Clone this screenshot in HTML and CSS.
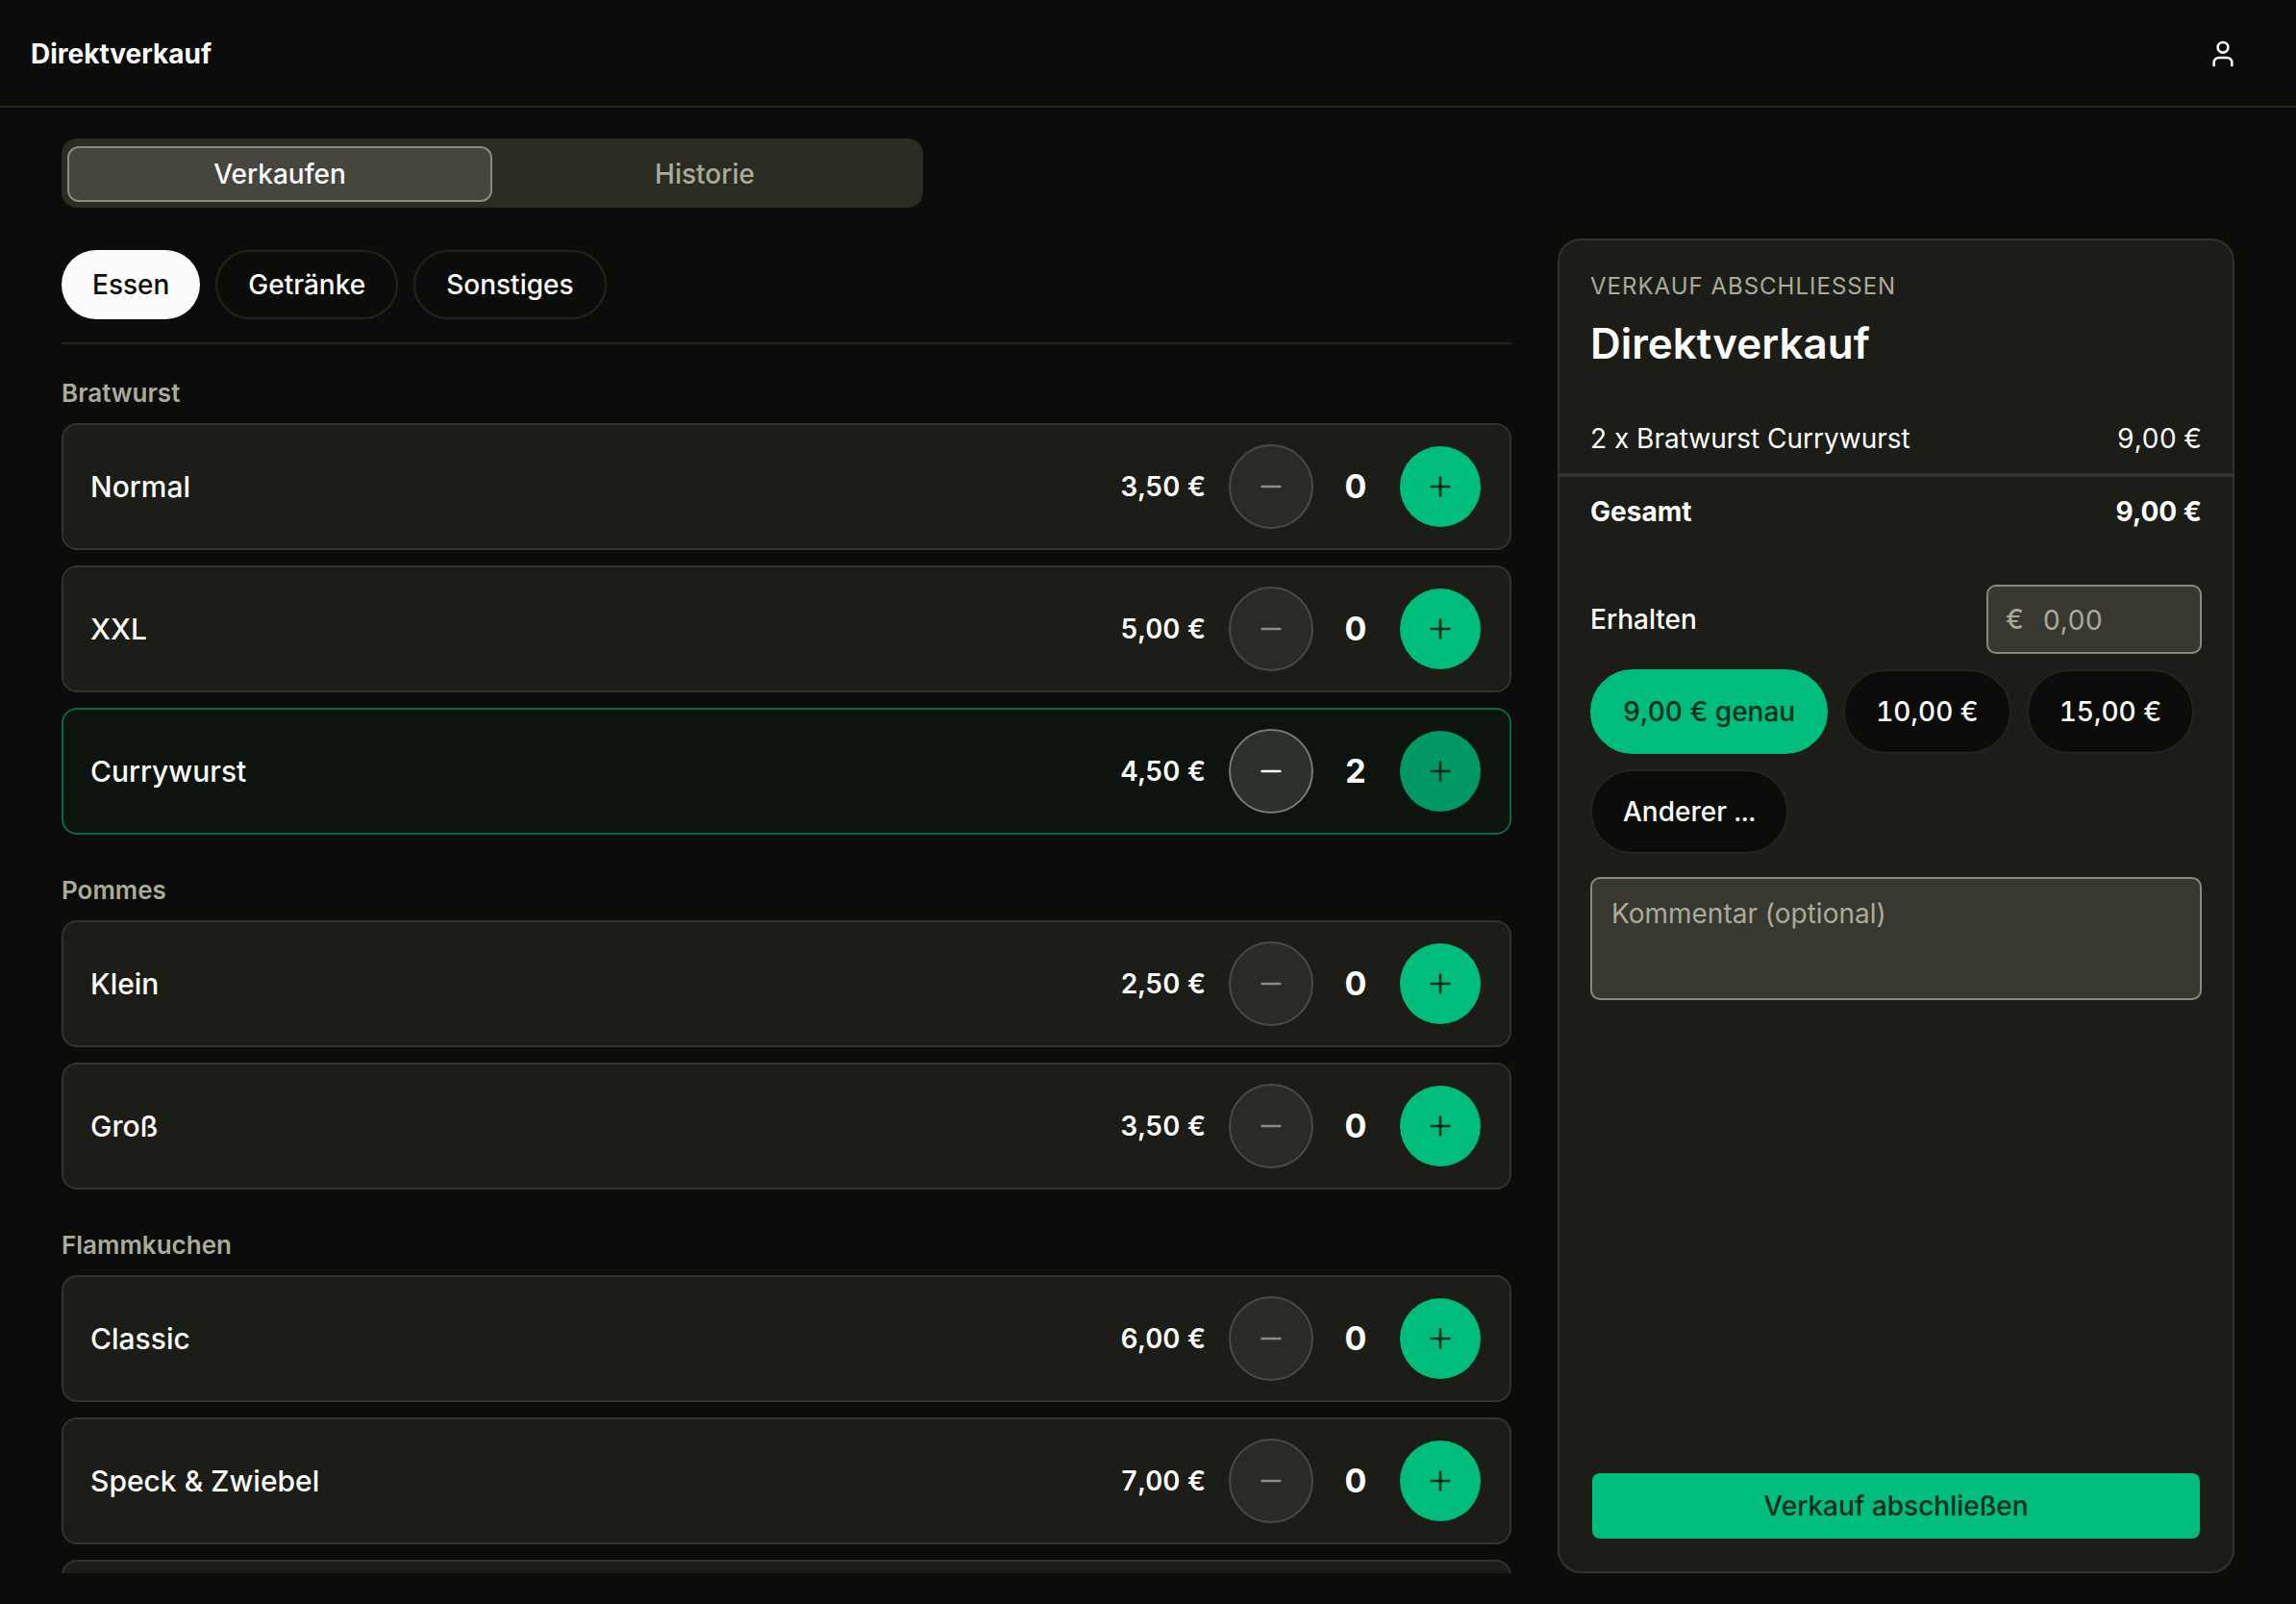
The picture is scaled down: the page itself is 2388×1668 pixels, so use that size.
FILE: index.html
```html
<!DOCTYPE html>
<html lang="de">
<head>
    <meta charset="UTF-8">
    <meta name="viewport" content="width=device-width, initial-scale=1.0">
    <title>Direktverkauf</title>
    <link rel="stylesheet" href="styles.css">
</head>
<body>
    <svg class="sprite" aria-hidden="true">
        <symbol id="minus" viewBox="0 0 24 24"><path d="M5 12h14"/></symbol>
        <symbol id="plus" viewBox="0 0 24 24"><path d="M5 12h14M12 5v14"/></symbol>
    </svg>

    <header class="topbar">
        <h1>Direktverkauf</h1>
        <button class="account" aria-label="Konto">
            <svg class="icon" viewBox="0 0 24 24"><path d="M19 21v-2a4 4 0 0 0-4-4H9a4 4 0 0 0-4 4v2"/><circle cx="12" cy="7" r="4"/></svg>
        </button>
    </header>

    <main>
        <div class="tabs" role="tablist">
            <button class="tab active" role="tab" aria-selected="true">Verkaufen</button>
            <button class="tab" role="tab" aria-selected="false">Historie</button>
        </div>

        <div class="columns">
            <div class="products">
                <nav class="categories">
                    <button class="pill selected">Essen</button>
                    <button class="pill">Getränke</button>
                    <button class="pill">Sonstiges</button>
                </nav>

                <div class="list">
                    <section>
                        <h2>Bratwurst</h2>
                        <ul>
                            <li class="item">
                                <span class="name">Normal</span>
                                <span class="price">3,50 €</span>
                                <button class="round minus" aria-label="Weniger" disabled><svg class="icon"><use href="#minus"/></svg></button>
                                <span class="count">0</span>
                                <button class="round plus" aria-label="Mehr"><svg class="icon"><use href="#plus"/></svg></button>
                            </li>
                            <li class="item">
                                <span class="name">XXL</span>
                                <span class="price">5,00 €</span>
                                <button class="round minus" aria-label="Weniger" disabled><svg class="icon"><use href="#minus"/></svg></button>
                                <span class="count">0</span>
                                <button class="round plus" aria-label="Mehr"><svg class="icon"><use href="#plus"/></svg></button>
                            </li>
                            <li class="item chosen">
                                <span class="name">Currywurst</span>
                                <span class="price">4,50 €</span>
                                <button class="round minus" aria-label="Weniger"><svg class="icon"><use href="#minus"/></svg></button>
                                <span class="count">2</span>
                                <button class="round plus" aria-label="Mehr"><svg class="icon"><use href="#plus"/></svg></button>
                            </li>
                        </ul>
                    </section>

                    <section>
                        <h2>Pommes</h2>
                        <ul>
                            <li class="item">
                                <span class="name">Klein</span>
                                <span class="price">2,50 €</span>
                                <button class="round minus" aria-label="Weniger" disabled><svg class="icon"><use href="#minus"/></svg></button>
                                <span class="count">0</span>
                                <button class="round plus" aria-label="Mehr"><svg class="icon"><use href="#plus"/></svg></button>
                            </li>
                            <li class="item">
                                <span class="name">Groß</span>
                                <span class="price">3,50 €</span>
                                <button class="round minus" aria-label="Weniger" disabled><svg class="icon"><use href="#minus"/></svg></button>
                                <span class="count">0</span>
                                <button class="round plus" aria-label="Mehr"><svg class="icon"><use href="#plus"/></svg></button>
                            </li>
                        </ul>
                    </section>

                    <section>
                        <h2>Flammkuchen</h2>
                        <ul>
                            <li class="item">
                                <span class="name">Classic</span>
                                <span class="price">6,00 €</span>
                                <button class="round minus" aria-label="Weniger" disabled><svg class="icon"><use href="#minus"/></svg></button>
                                <span class="count">0</span>
                                <button class="round plus" aria-label="Mehr"><svg class="icon"><use href="#plus"/></svg></button>
                            </li>
                            <li class="item">
                                <span class="name">Speck &amp; Zwiebel</span>
                                <span class="price">7,00 €</span>
                                <button class="round minus" aria-label="Weniger" disabled><svg class="icon"><use href="#minus"/></svg></button>
                                <span class="count">0</span>
                                <button class="round plus" aria-label="Mehr"><svg class="icon"><use href="#plus"/></svg></button>
                            </li>
                            <li class="item"></li>
                        </ul>
                    </section>
                </div>
            </div>

            <form class="checkout">
                <div class="intro">
                    <p class="eyebrow">Verkauf abschliessen</p>
                    <h2>Direktverkauf</h2>
                </div>
                <div class="line">
                    <span>2 x Bratwurst Currywurst</span>
                    <span class="amount">9,00 €</span>
                </div>
                <div class="line total">
                    <span>Gesamt</span>
                    <span>9,00 €</span>
                </div>

                <div class="payment">
                    <div class="received">
                        <label for="received">Erhalten</label>
                        <div class="money">
                            <span>€</span>
                            <input id="received" type="text" inputmode="decimal" placeholder="0,00">
                        </div>
                    </div>
                    <div class="amounts">
                        <button type="button" class="pill big exact">9,00 € genau</button>
                        <button type="button" class="pill big">10,00 €</button>
                        <button type="button" class="pill big">15,00 €</button>
                        <button type="button" class="pill big">Anderer ...</button>
                    </div>
                    <textarea aria-label="Kommentar" placeholder="Kommentar (optional)"></textarea>
                </div>

                <button type="button" class="submit">Verkauf abschließen</button>
            </form>
        </div>
    </main>
</body>
</html>
```
FILE: styles.css
```css
:root {
    --bg: #0c0c0a;
    --card: #1d1d17;
    --muted-bg: #2b2b22;
    --line: #23231f;
    --card-line: #33332d;
    --text: #fbfbf9;
    --muted: #abab9c;
    --field: #383831;
    --field-line: #8a8a80;
    --green: #00bc7d;
    --dark-green: #002c22;
}

* {
    box-sizing: border-box;
    margin: 0;
    padding: 0;
}

body {
    display: flex;
    flex-direction: column;
    height: 100vh;
    background: var(--bg);
    color: var(--text);
    font: 28px/40px Inter, sans-serif;
    font-optical-sizing: none;
}

button,
input,
textarea {
    font: inherit;
    font-optical-sizing: inherit;
    color: inherit;
}

button {
    border: 2px solid transparent;
    background: none;
    font-weight: 500;
    cursor: pointer;
}

ul {
    list-style: none;
}

.sprite {
    display: none;
}

.icon {
    display: block;
    width: 32px;
    height: 32px;
    fill: none;
    stroke: currentColor;
    stroke-width: 2;
    stroke-linecap: round;
    stroke-linejoin: round;
}

.topbar {
    display: flex;
    align-items: center;
    justify-content: space-between;
    height: 112px;
    padding: 2px 44px 0 32px;
    border-bottom: 2px solid var(--line);
}

.topbar h1 {
    font-size: 28px;
    font-weight: 700;
}

.account {
    padding: 14px;
}

main {
    flex: 1;
    min-height: 0;
    display: flex;
    flex-direction: column;
    gap: 32px;
    padding: 32px 64px;
}

.tabs {
    display: flex;
    align-items: center;
    max-width: 896px;
    height: 72px;
    padding: 8px 6px 6px;
    border-radius: 16px;
    background: var(--muted-bg);
    flex-shrink: 0;
}

.tab {
    flex: 1;
    height: 58px;
    border-radius: 12px;
    color: var(--muted);
}

.tab.active {
    background: #46463e;
    border-color: var(--field-line);
    color: var(--text);
}

.columns {
    flex: 1;
    min-height: 0;
    display: grid;
    grid-template-columns: minmax(0, 1fr) 704px;
    gap: 48px;
}

/* products */

.products {
    display: flex;
    flex-direction: column;
    min-height: 0;
}

.categories {
    display: flex;
    gap: 16px;
    padding: 12px 0 24px;
    border-bottom: 2px solid var(--line);
}

.pill {
    height: 72px;
    padding: 0 32px;
    border-color: var(--line);
    border-radius: 44px;
    background: var(--bg);
}

.pill.selected {
    background: var(--text);
    border: none;
    color: var(--bg);
}

.list {
    flex: 1;
    min-height: 0;
    display: flex;
    flex-direction: column;
    gap: 39px;
    padding-top: 32px;
    overflow-y: auto;
    scrollbar-width: none;
}

.list h2 {
    margin-bottom: 12px;
    color: var(--muted);
    font-size: 26px;
    line-height: 38px;
    font-weight: 600;
}

.list ul {
    display: flex;
    flex-direction: column;
    gap: 16px;
}

.item {
    display: flex;
    align-items: center;
    gap: 16px;
    min-height: 132px;
    padding: 20px 28px;
    border: 2px solid var(--card-line);
    border-radius: 16px;
    background: var(--card);
}

.item.chosen {
    background: #0c140d;
    border-color: #0a6848;
}

.name {
    flex: 1;
    font-size: 30px;
    font-weight: 500;
}

.price,
.amount,
.money,
.amounts {
    font-variant-numeric: tabular-nums;
}

.price {
    margin-right: 8px;
    font-weight: 600;
}

.count {
    width: 56px;
    font-size: 34px;
    font-weight: 700;
    text-align: center;
}

.round {
    display: grid;
    place-items: center;
    width: 88px;
    height: 88px;
    border-radius: 50%;
}

.minus {
    background: #2b312b;
    border-color: #767b75;
}

.minus:disabled {
    background: #2b2b26;
    border-color: #4b4b45;
    color: #8c8c85;
}

.plus {
    background: var(--green) padding-box;
    color: var(--dark-green);
}

.chosen .plus {
    background-color: #009966;
}

/* checkout */

.checkout {
    display: flex;
    flex-direction: column;
    padding: 32px 0;
    border: 2px solid var(--card-line);
    border-radius: 24px;
    background: var(--card);
}

.intro {
    padding: 0 32px 32px;
}

.eyebrow {
    margin-bottom: 12px;
    color: var(--muted);
    font-size: 24px;
    line-height: 32px;
    letter-spacing: 1px;
    text-transform: uppercase;
}

.intro h2 {
    font-size: 44px;
    line-height: 62px;
    font-weight: 600;
}

.line {
    display: flex;
    justify-content: space-between;
    padding: 16px 32px;
}

.total {
    border-top: 4px solid var(--card-line);
    font-weight: 700;
}

.payment {
    display: flex;
    flex-direction: column;
    padding: 40px 32px 0;
}

.received {
    display: flex;
    align-items: center;
    justify-content: space-between;
    margin-bottom: 16px;
    font-weight: 500;
}

.money {
    display: flex;
    align-items: center;
    gap: 20px;
    width: 224px;
    height: 72px;
    padding: 0 18px;
    border: 2px solid var(--field-line);
    border-radius: 10px;
    background: var(--field);
    color: var(--muted);
}

.money input {
    width: 100%;
    min-width: 0;
    padding-top: 2px;
    border: none;
    background: none;
    color: var(--text);
    font-weight: 400;
    font-variant-numeric: inherit;
}

::placeholder {
    color: var(--muted);
}

.amounts {
    display: flex;
    flex-wrap: wrap;
    gap: 16px;
    margin-bottom: 24px;
}

.pill.big {
    height: 88px;
    font-variant-numeric: inherit;
}

.pill.exact {
    background: var(--green);
    border-color: var(--green);
    color: var(--dark-green);
}

textarea {
    height: 128px;
    padding: 16px 20px;
    border: 2px solid var(--field-line);
    border-radius: 10px;
    background: var(--field);
    resize: none;
}

.submit {
    height: 72px;
    margin: auto 32px 0;
    border-radius: 10px;
    background: var(--green) padding-box;
    color: var(--dark-green);
}
```
